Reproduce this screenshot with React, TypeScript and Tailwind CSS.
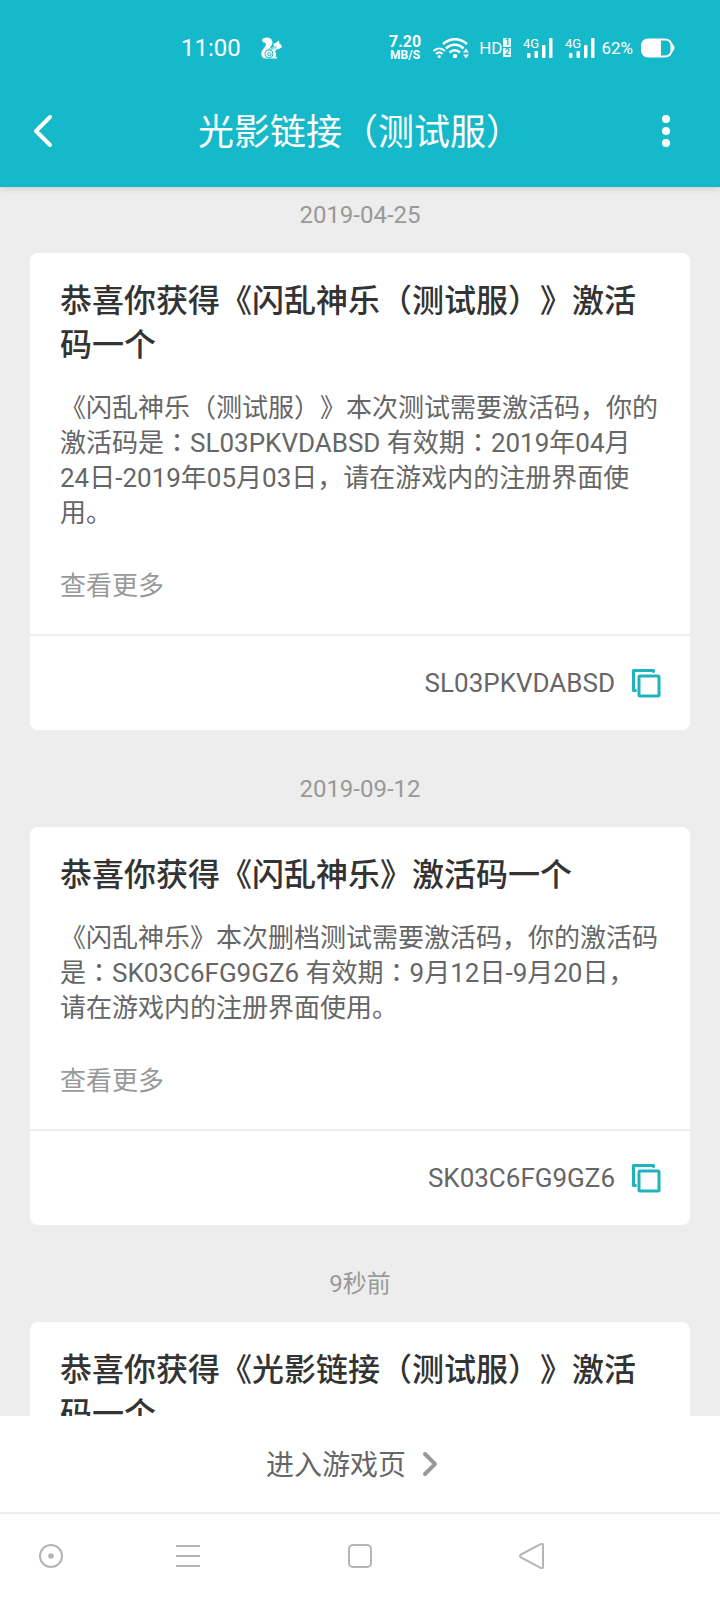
import { Fragment } from "react";

type Notice = {
  id: number;
  date: string;
  title: string;
  lines?: string[];
  code?: string;
};

const notices: Notice[] = [
  {
    id: 1,
    date: "2019-04-25",
    title: "恭喜你获得《闪乱神乐（测试服）》激活码一个",
    lines: [
      "《闪乱神乐（测试服）》本次测试需要激活码，你的激活码是：SL03PKVDABSD 有效期：2019年04月",
      "24日-2019年05月03日，请在游戏内的注册界面使用。",
    ],
    code: "SL03PKVDABSD",
  },
  {
    id: 2,
    date: "2019-09-12",
    title: "恭喜你获得《闪乱神乐》激活码一个",
    lines: [
      "《闪乱神乐》本次删档测试需要激活码，你的激活码是：SK03C6FG9GZ6 有效期：9月12日-9月20日，",
      "请在游戏内的注册界面使用。",
    ],
    code: "SK03C6FG9GZ6",
  },
  {
    id: 3,
    date: "9秒前",
    title: "恭喜你获得《光影链接（测试服）》激活码一个",
  },
];

function SquirrelIcon() {
  return (
    <svg viewBox="0 0 63 65" className="h-[22px] w-[21px]" aria-hidden>
      <path
        fill="#fff"
        d="M3 8C8 0 22-1 29 5c7 6 6 13 3 19-3 6-8 9-9 14 5-6 12-8 18-10-4-3-5-6-3-9 3 0 6-1 8-3l8-6 1 8c4 3 7 7 8 12-5 4-12 5-17 7l-4 6c5 6 4 12 1 15l5 2v4H14C4 64 0 56 1 48c1-10 11-16 13-24 1-5-1-8-4-8-4 1-6-3-7-8z"
      />
      <circle cx="24" cy="50" r="12" fill="none" stroke="#15b9c9" strokeWidth="3" />
      <circle cx="25" cy="51" r="5" fill="none" stroke="#15b9c9" strokeWidth="3" />
      <path d="M22 38c11-5 18 1 24-7M30 34c8-4 14-1 18-8" fill="none" stroke="#15b9c9" strokeWidth="2" />
    </svg>
  );
}

function WifiIcon() {
  return (
    <svg viewBox="0 0 36 22" className="-mr-0.5 h-[22px] w-9" fill="none" stroke="#fff" strokeWidth="2" aria-hidden>
      <path d="M10 7c7-6.500 17-6.500 24 0" strokeWidth="2.500" />
      <path d="M13 11.500c5-5 12.500-5 17.500 0" strokeWidth="2.500" />
      <path d="M16.500 15.500c3-3 7.500-3 10.500 0" strokeWidth="2.500" />
      <circle cx="22" cy="19" r="2.200" fill="#fff" stroke="none" />
      <path d="M0.500 14c3.500-3.500 8-3.500 11.500 0" />
      <path d="M3 17c2-2 4.500-2 6.500 0" />
      <circle cx="6.200" cy="19.500" r="1.500" fill="#fff" stroke="none" />
      <path d="M30 15.500l3-4 3 4zM30 17.500l3 4 3-4z" fill="#fff" stroke="none" />
    </svg>
  );
}

function SignalIcon() {
  return (
    <svg viewBox="0 0 30 22" className="h-[22px] w-[30px]" fill="#fff" role="img" aria-label="4G">
      <text x="0" y="11" fontSize="13" fontFamily="Roboto, sans-serif">
        4G
      </text>
      <rect x="4" y="16" width="3.500" height="5" rx="1" />
      <rect x="11.500" y="14" width="3.500" height="7" rx="1" />
      <rect x="19" y="8" width="3.500" height="13" rx="1" />
      <rect x="26" y="1" width="3.500" height="20" rx="1" />
    </svg>
  );
}

function BatteryIcon() {
  return (
    <svg viewBox="0 0 34 20" className="h-5 w-[34px]" aria-hidden>
      <rect x="1" y="1.500" width="29.500" height="17" rx="6" fill="none" stroke="#fff" strokeWidth="2" />
      <path d="M7 1h13v18H7a6 6 0 0 1-6-6V7a6 6 0 0 1 6-6z" fill="#fff" />
      <path d="M31 5.500q5 4.500 0 9z" fill="#fff" />
    </svg>
  );
}

function StatusBar() {
  return (
    <div className="flex h-[75px] items-center justify-between pt-5 pr-[45px] pl-[181px]">
      <div className="flex items-center gap-5">
        <time className="text-[24px] leading-6">11:00</time>
        <SquirrelIcon />
      </div>
      <div className="flex items-center gap-3">
        <div className="flex flex-col items-center font-bold">
          <span className="text-[16px] leading-[14px]">7.20</span>
          <span className="text-[12px] leading-3">MB/S</span>
        </div>
        <WifiIcon />
        <div className="flex items-center gap-px">
          <span className="text-[17px] leading-5">HD</span>
          <span className="flex flex-col gap-px text-center text-[9px] leading-[9px] font-bold text-[#15b9c9]">
            <span className="w-2 rounded-[1px] bg-white">1</span>
            <span className="w-2 rounded-[1px] bg-white">2</span>
          </span>
        </div>
        <SignalIcon />
        <SignalIcon />
        <div className="-ml-1.5 flex items-center gap-2">
          <span className="text-[17px] leading-5">62%</span>
          <BatteryIcon />
        </div>
      </div>
    </div>
  );
}

function Header() {
  return (
    <header className="relative z-10 bg-[#15b9c9] text-white shadow-[0_2px_6px_rgba(0,0,0,0.12)]">
      <StatusBar />
      <div className="flex h-28 items-center justify-between">
        <button type="button" aria-label="返回" className="flex h-full w-[108px] items-center pl-8">
          <svg viewBox="0 0 22 36" className="h-9 w-[22px]" fill="none" stroke="#fff" strokeWidth="4" aria-hidden>
            <path d="M18 4 4 18l14 14" strokeLinecap="round" strokeLinejoin="round" />
          </svg>
        </button>
        <h1 className="pt-1 text-[36px] leading-[48px] font-normal">光影链接（测试服）</h1>
        <button type="button" aria-label="更多" className="flex h-full w-[108px] items-center justify-center">
          <svg viewBox="0 0 10 34" className="h-[34px] w-[10px]" fill="#fff" aria-hidden>
            <circle cx="5" cy="5" r="4" />
            <circle cx="5" cy="17" r="4" />
            <circle cx="5" cy="29" r="4" />
          </svg>
        </button>
      </div>
    </header>
  );
}

// The full-width colon sits in the middle of its box
function Line({ text }: { text: string }) {
  const parts = text.split("：");
  return (
    <span className="block">
      {parts.map((part, i) => (
        <Fragment key={i}>
          {i > 0 && <span className="font-['Noto_Sans_CJK_TC',sans-serif] leading-none">：</span>}
          {part}
        </Fragment>
      ))}
    </span>
  );
}

function CopyIcon() {
  return (
    <svg viewBox="0 0 30 30" className="size-[30px]" fill="none" stroke="#1fb3be" strokeWidth="3" aria-hidden>
      <path d="M22.500 3.500V2.500h-20v20h2" strokeLinejoin="round" strokeLinecap="round" />
      <rect x="8" y="8" width="20" height="20" rx="1" />
    </svg>
  );
}

function NoticeCard({ notice }: { notice: Notice }) {
  return (
    <section>
      <p className="mb-5 text-center text-[24px] leading-9 text-[#999]">{notice.date}</p>
      <article className="rounded-lg bg-white">
        <div className="px-[30px] pt-[26px] pb-[30px]">
          <h2 className="text-[32px] leading-[44px] font-medium text-[#333]">{notice.title}</h2>
          {notice.lines && (
            <>
              <p className="mt-6 text-[26px] leading-[35px] text-[#666]">
                {notice.lines.map((line) => (
                  <Line key={line} text={line} />
                ))}
              </p>
              <a href="#more" className="mt-[38px] block w-fit text-[26px] leading-[35px] text-[#999]">
                查看更多
              </a>
            </>
          )}
        </div>
        {notice.code && (
          <div className="flex h-24 items-center justify-end gap-4 border-t-2 border-[#eee] pr-[29px]">
            <span className="text-[26px] leading-8 text-[#666]">{notice.code}</span>
            <button type="button" aria-label={`复制 ${notice.code}`}>
              <CopyIcon />
            </button>
          </div>
        )}
      </article>
    </section>
  );
}

function SystemNav() {
  return (
    <nav
      aria-label="系统导航"
      className="grid h-[88px] grid-cols-[102fr_172fr_172fr_172fr_102fr] items-center justify-items-center border-t-2 border-[#eee] bg-white pb-0.5"
    >
      <button type="button" aria-label="助手">
        <svg viewBox="0 0 26 26" className="size-[26px]" fill="none" stroke="#b5b5b5" strokeWidth="2" aria-hidden>
          <circle cx="13" cy="13" r="11" />
          <circle cx="13" cy="13" r="2.800" fill="#b5b5b5" stroke="none" />
        </svg>
      </button>
      <button type="button" aria-label="最近任务">
        <svg viewBox="0 0 26 26" className="size-[26px]" stroke="#b5b5b5" strokeWidth="2" aria-hidden>
          <path d="M1 3h24M1 13h24M1 23h24" />
        </svg>
      </button>
      <button type="button" aria-label="主页">
        <svg viewBox="0 0 26 26" className="size-[26px]" fill="none" stroke="#b5b5b5" strokeWidth="2" aria-hidden>
          <rect x="2" y="2" width="22" height="22" rx="4" />
        </svg>
      </button>
      <button type="button" aria-label="返回上一页">
        <svg viewBox="0 0 26 26" className="size-[26px]" fill="none" stroke="#b5b5b5" strokeWidth="2" aria-hidden>
          <path d="M2 11.500 21.500 1.200q2.500-1 2.500 1v21.600q0 2-2.500 1L2 14.500q-2-1.500 0-3z" />
        </svg>
      </button>
    </nav>
  );
}

export default function App() {
  return (
    <div className="flex h-screen flex-col bg-[#ededed] font-[Roboto,'Noto_Sans_CJK_SC',sans-serif] [text-spacing-trim:space-all]">
      <Header />
      <main className="flex min-h-0 flex-1 flex-col gap-[41px] overflow-y-auto px-[30px] pt-[10px] [scrollbar-width:none]">
        {notices.map((notice) => (
          <NoticeCard key={notice.id} notice={notice} />
        ))}
      </main>
      <a
        href="#game"
        className="flex h-24 items-center justify-center gap-4 bg-white pr-4 text-[28px] leading-9 text-[#666]"
      >
        <span className="pt-1">进入游戏页</span>
        <svg viewBox="0 0 16 26" className="h-[26px] w-4" fill="none" stroke="#999" strokeWidth="4" aria-hidden>
          <path d="M3 3l10 10L3 23" strokeLinecap="round" strokeLinejoin="round" />
        </svg>
      </a>
      <SystemNav />
    </div>
  );
}
